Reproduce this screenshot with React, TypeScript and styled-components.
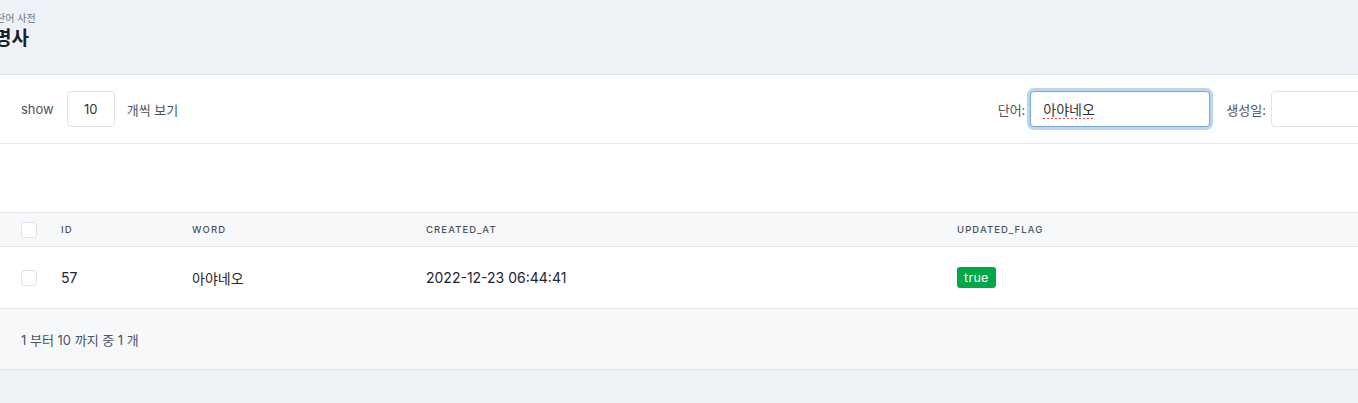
import React from "react";
import styled, { createGlobalStyle } from "styled-components";

const Global = createGlobalStyle`
  html, body { margin: 0; padding: 0; background: #eef2f6; overflow: hidden; }
  body { font-family: Inter, "Noto Sans CJK KR", sans-serif; color: #1f2430; }
  * { box-sizing: border-box; }
`;

const Page = styled.div`
  width: 1358px;
  height: 403px;
  overflow: hidden;
  background: #eef2f6;
`;

const Header = styled.header`
  height: 75px;
  border-bottom: 1px solid #dfe3e8;
  padding: 12px 0 0 0;
  margin-left: -4px;
`;

const Breadcrumb = styled.div`
  font-size: 10px;
  line-height: 12px;
  color: #6b7280;
`;

const Title = styled.h1`
  margin: 3px 0 0 -2px;
  font-size: 19px;
  line-height: 24px;
  font-weight: 600;
  color: #1a202c;
`;

const Panel = styled.section`
  background: #fff;
  border-bottom: 1px solid #dfe3e8;
`;

const Toolbar = styled.div`
  height: 69px;
  display: flex;
  align-items: center;
  padding-left: 21px;
  border-bottom: 1px solid #e2e5e9;
  font-size: 13px;
  color: #4b5260;
`;

const Label = styled.span`
  font-size: 13px;
  color: #4b5260;
`;

const SizeInput = styled.input`
  width: 48px;
  height: 36px;
  margin: 0 12px 0 13px;
  border: 1px solid #e0e3e7;
  border-radius: 4px;
  text-align: center;
  font: 13px Inter, "Noto Sans CJK KR", sans-serif;
  color: #333;
  outline: none;
`;

const Filters = styled.div`
  margin-left: auto;
  margin-right: -93px;
  display: flex;
  align-items: center;
`;

const FilterInput = styled.input<{ $focused?: boolean; $width: number }>`
  width: ${(p) => p.$width}px;
  height: 36px;
  margin-left: 5px;
  border: 1px solid ${(p) => (p.$focused ? "#7aa7d9" : "#e0e3e7")};
  border-radius: 4px;
  padding: 0 12px;
  font: 14px Inter, "Noto Sans CJK KR", sans-serif;
  color: #333;
  outline: none;
  box-shadow: ${(p) => (p.$focused ? "0 0 0 3px #bcd4ee" : "none")};
  text-decoration: ${(p) => (p.$focused ? "underline dotted #e5484d" : "none")};
  text-decoration-thickness: 2px;
  text-underline-offset: 3px;
`;

const FilterGroup = styled.div<{ $gap: number }>`
  display: flex;
  align-items: center;
  margin-left: ${(p) => p.$gap}px;
`;

const Spacer = styled.div`
  height: 69px;
  border-bottom: 1px solid #e2e5e9;
`;

const Table = styled.div`
  width: 100%;
`;

const Row = styled.div<{ $head?: boolean }>`
  display: grid;
  grid-template-columns: 40px 131px 234px 531px 1fr;
  align-items: center;
  height: ${(p) => (p.$head ? "34px" : "62px")};
  background: ${(p) => (p.$head ? "#f7f8fa" : "#fff")};
  border-bottom: 1px solid #e2e5e9;
  padding-left: 21px;
`;

const Check = styled.span`
  width: 16px;
  height: 16px;
  border: 1px solid #e0e3e7;
  border-radius: 3px;
  background: #fff;
  display: block;
`;

const HeadCell = styled.div`
  font-size: 9.5px;
  letter-spacing: 1.1px;
  text-transform: uppercase;
  color: #4b5260;
  font-weight: 500;
`;

const Cell = styled.div`
  font-size: 14px;
  color: #1f2430;
`;

const Badge = styled.span`
  display: inline-block;
  background: #00a846;
  color: #fff;
  font-size: 12.5px;
  line-height: 21px;
  padding: 0 7px;
  border-radius: 3px;
  letter-spacing: 0.3px;
`;

const Footer = styled.div`
  height: 60px;
  background: #f7f8fa;
  display: flex;
  align-items: center;
  padding-left: 21px;
  font-size: 13px;
  color: #4b5260;
`;

export default function App() {
  return (
    <Page>
      <Global />
      <Header>
        <Breadcrumb>단어 사전</Breadcrumb>
        <Title>명사</Title>
      </Header>
      <Panel>
        <Toolbar>
          <Label>show</Label>
          <SizeInput defaultValue="10" />
          <Label>개씩 보기</Label>
          <Filters>
            <FilterGroup $gap={0}>
              <Label>단어:</Label>
              <FilterInput $focused $width={180} defaultValue="아야네오" />
            </FilterGroup>
            <FilterGroup $gap={16}>
              <Label>생성일:</Label>
              <FilterInput $width={180} />
            </FilterGroup>
          </Filters>
        </Toolbar>
        <Spacer />
        <Table>
          <Row $head>
            <Check />
            <HeadCell>ID</HeadCell>
            <HeadCell>word</HeadCell>
            <HeadCell>created_at</HeadCell>
            <HeadCell>updated_flag</HeadCell>
          </Row>
          <Row>
            <Check />
            <Cell>57</Cell>
            <Cell>아야네오</Cell>
            <Cell>2022-12-23 06:44:41</Cell>
            <Cell>
              <Badge>true</Badge>
            </Cell>
          </Row>
        </Table>
        <Footer>1 부터 10 까지 중 1 개</Footer>
      </Panel>
    </Page>
  );
}
